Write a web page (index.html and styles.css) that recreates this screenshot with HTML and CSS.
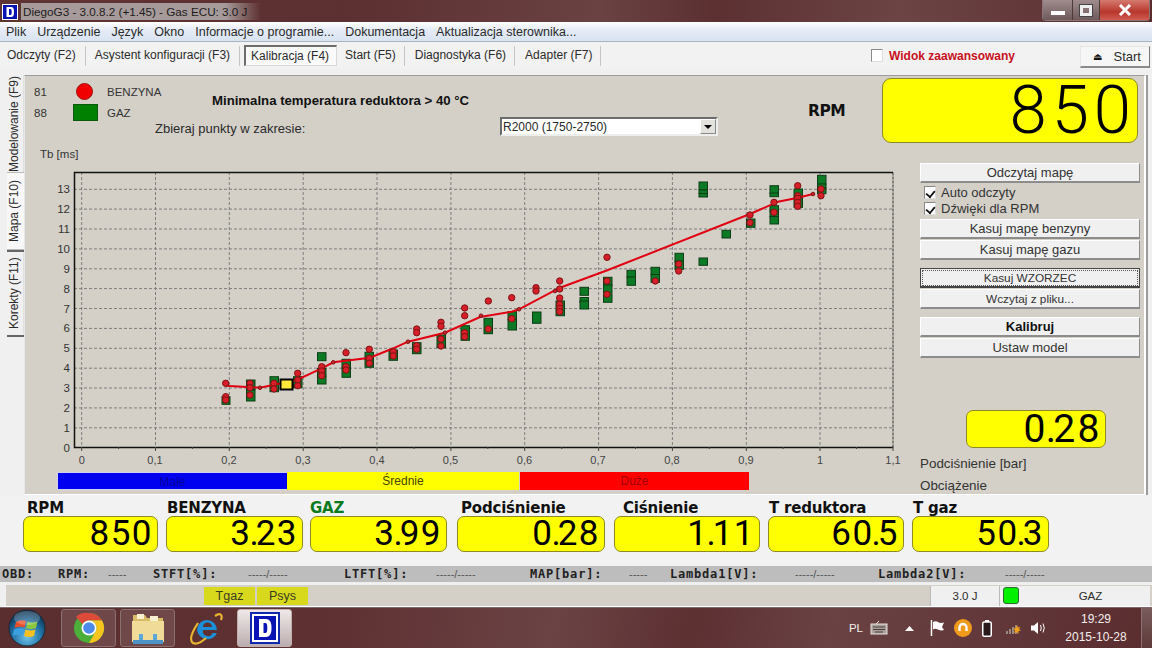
FILE: index.html
```html
<!DOCTYPE html>
<html lang="pl">
<head>
<meta charset="utf-8">
<title>DiegoG3</title>
<link rel="stylesheet" href="styles.css">
</head>
<body>
<div class="app">
  <header class="titlebar">
    <svg class="app-ico" viewBox="0 0 16 16"><rect width="16" height="16" fill="#fff"/><rect x="1" y="1" width="14" height="14" fill="#0a14b4"/><path d="M4.5 3h4.5c2.300 0 3 1.600 3 5s-.7 5-3 5H4.500z" fill="#fff"/><path d="M7 5h1.500c.9 0 1.200 1 1.200 3s-.3 3-1.200 3H7z" fill="#0a14b4"/></svg>
    <span class="title-text">DiegoG3 - 3.0.8.2 (+1.45) - Gas ECU: 3.0 J</span>
    <div class="winbtns">
      <span class="wb wb-min"><i></i></span>
      <span class="wb wb-max"><i></i></span>
      <span class="wb wb-close">
        <svg viewBox="0 0 14 12" width="14" height="12"><path d="M2 1l10 10M12 1L2 11" stroke="#fff" stroke-width="3"/></svg>
      </span>
    </div>
  </header>

  <nav class="menubar">
    <span>Plik</span><span>Urządzenie</span><span>Język</span><span>Okno</span><span>Informacje o programie...</span><span>Dokumentacja</span><span>Aktualizacja sterownika...</span>
  </nav>

  <div class="tabbar">
    <span class="tab">Odczyty (F2)</span>
    <span class="tab">Asystent konfiguracji (F3)</span>
    <span class="tab tab-active">Kalibracja (F4)</span>
    <span class="tab">Start (F5)</span>
    <span class="tab">Diagnostyka (F6)</span>
    <span class="tab">Adapter (F7)</span>
    <label class="adv"><i class="cb"></i>Widok zaawansowany</label>
    <button class="start-btn"><span class="eject">⏏</span>Start</button>
  </div>

  <main class="workspace">
    <div class="vtabs">
      <span class="vtab">Modelowanie (F9)</span>
      <span class="vtab">Mapa (F10)</span>
      <span class="vtab">Korekty (F11)</span>
    </div>
    <section class="panel">
      <div class="head">
        <div class="legend">
          <div class="leg-row"><span class="leg-num">81</span><span class="leg-ico"><i class="leg-dot"></i></span><span>BENZYNA</span></div>
          <div class="leg-row"><span class="leg-num">88</span><span class="leg-ico"><i class="leg-sq"></i></span><span>GAZ</span></div>
          <div class="axis-name">Tb [ms]</div>
        </div>
        <div class="center">
          <div class="cond">Minimalna temperatura reduktora &gt; 40 °C</div>
          <div class="range">
            <span class="range-label">Zbieraj punkty w zakresie:</span>
            <div class="select"><span>R2000 (1750-2750)</span><i class="sel-btn"></i></div>
          </div>
        </div>
        <div class="rpm-label">RPM</div>
        <div class="lcd lcd-big">850</div>
      </div>
      <div class="body">
        <div class="chart-col">
          <svg class="chart" viewBox="24 163 881 307" width="881" height="307">
            <g class="grid">
              <path d="M81.700 172V447M155.500 172V447M229.300 172V447M303.200 172V447M377 172V447M450.900 172V447M524.700 172V447M598.600 172V447M672.400 172V447M746.300 172V447M820 172V447"/>
              <path d="M74 427.800H893M74 407.900H893M74 388H893M74 368.200H893M74 348.300H893M74 328.400H893M74 308.500H893M74 288.600H893M74 268.800H893M74 248.900H893M74 229H893M74 209.100H893M74 189.300H893"/>
            </g>
            <path class="frame" d="M893 172.500V447.500"/>
            <path class="axes" d="M893 172.500H74.500V447.500H893"/>
            <path class="ticks" d="M81.700 447v4M118.600 447v2M155.500 447v4M192.400 447v2M229.300 447v4M266.200 447v2M303.200 447v4M340.100 447v2M377 447v4M414 447v2M450.900 447v4M487.800 447v2M524.700 447v4M561.700 447v2M598.600 447v4M635.500 447v2M672.400 447v4M709.300 447v2M746.300 447v4M783.200 447v2M820 447v4M856.500 447v2M893 447v4"/>
            <g class="ylab">
              <text x="70" y="452">0</text><text x="70" y="432">1</text><text x="70" y="412">2</text><text x="70" y="392">3</text><text x="70" y="372">4</text><text x="70" y="352">5</text><text x="70" y="332">6</text><text x="70" y="313">7</text><text x="70" y="293">8</text><text x="70" y="273">9</text><text x="70" y="253">10</text><text x="70" y="233">11</text><text x="70" y="213">12</text><text x="70" y="193">13</text>
            </g>
            <g class="xlab">
              <text x="81.700" y="464">0</text><text x="155" y="464">0,1</text><text x="229" y="464">0,2</text><text x="303" y="464">0,3</text><text x="377" y="464">0,4</text><text x="450.500" y="464">0,5</text><text x="524.500" y="464">0,6</text><text x="598" y="464">0,7</text><text x="672" y="464">0,8</text><text x="746" y="464">0,9</text><text x="820" y="464">1</text><text x="893" y="464">1,1</text>
            </g>
            <g class="gas">
              <rect x="222" y="396.700" width="8" height="7.600"/>
              <rect x="246.500" y="380" width="8.500" height="10"/><rect x="246.500" y="390" width="8.500" height="11"/>
              <rect x="270" y="376.700" width="8.500" height="15"/>
              <rect x="293.500" y="376.700" width="8.500" height="11"/>
              <rect x="317.500" y="352.700" width="8.500" height="8"/>
              <rect x="317.500" y="368.300" width="8.500" height="8"/><rect x="317.500" y="376" width="8.500" height="8"/>
              <rect x="342" y="359.300" width="8.500" height="9"/><rect x="342" y="368" width="8.500" height="9.300"/>
              <rect x="365" y="352.300" width="8.500" height="7"/><rect x="365" y="359" width="8.500" height="8.300"/>
              <rect x="389" y="350" width="8.500" height="10.300"/>
              <rect x="412.500" y="342.700" width="8.500" height="11"/>
              <rect x="437" y="335" width="8.500" height="12.700"/>
              <rect x="461" y="325.700" width="8.500" height="14.600"/>
              <rect x="484" y="318.300" width="8.500" height="15.400"/>
              <rect x="508" y="311.700" width="8.500" height="8"/><rect x="508" y="319.500" width="8.500" height="10.500"/>
              <rect x="532.500" y="312" width="8.500" height="11.300"/>
              <rect x="556" y="301" width="8.500" height="14.700"/>
              <rect x="580" y="287.300" width="8.500" height="8"/><rect x="580" y="297.500" width="8.500" height="5"/><rect x="580" y="301" width="8.500" height="8"/>
              <rect x="603.500" y="277.300" width="8.500" height="8"/><rect x="603.500" y="285" width="8.500" height="8"/><rect x="603.500" y="294" width="8.500" height="8.300"/>
              <rect x="627" y="270.300" width="8.500" height="7"/><rect x="627" y="277" width="8.500" height="8.300"/>
              <rect x="651" y="267.300" width="8.500" height="7.500"/><rect x="651" y="274.500" width="8.500" height="7.800"/>
              <rect x="675" y="253.300" width="8.500" height="8"/><rect x="675" y="261" width="8.500" height="8.300"/>
              <rect x="699" y="258" width="8.500" height="7.300"/>
              <rect x="722" y="230.300" width="8.500" height="7.700"/>
              <rect x="746.500" y="219" width="8.500" height="8.300"/>
              <rect x="770" y="205.700" width="8.500" height="6"/><rect x="770" y="211" width="8.500" height="6"/><rect x="770" y="216.500" width="8.500" height="7.500"/>
              <rect x="770" y="185.700" width="8.500" height="8"/><rect x="770" y="193" width="8.500" height="3.700"/>
              <rect x="794" y="189" width="8.500" height="9"/><rect x="794" y="198" width="8.500" height="9.300"/>
              <rect x="817.500" y="175.300" width="8.500" height="9"/><rect x="817.500" y="184" width="8.500" height="4"/><rect x="817.500" y="188" width="8.500" height="5.700"/>
              <rect x="699" y="182" width="8.500" height="8"/><rect x="699" y="190" width="8.500" height="3.500"/><rect x="699" y="193.500" width="8.500" height="3.500"/>
            </g>
            <polyline class="curve" points="225,385.700 260,387.700 296.700,380 321.700,368.300 333.300,362.300 370,357.700 393.300,348.300 408,341.700 445,332.700 480,317 511.700,311.700 519,309.300 560,287.700 608,270 750,214 778,201.700 798,197.700 813,194"/>
            <g class="dots">
              <circle cx="225.700" cy="383.300" r="3.200"/><circle cx="225.700" cy="396.700" r="3.200"/><circle cx="225.700" cy="400" r="3.200"/><circle cx="250" cy="383.300" r="3.200"/><circle cx="250" cy="387.700" r="3.200"/><circle cx="250" cy="395" r="3.200"/><circle cx="274" cy="383.300" r="3.200"/><circle cx="274" cy="389" r="3.200"/><circle cx="297.700" cy="373.300" r="3.200"/><circle cx="297.700" cy="380" r="3.200"/><circle cx="297.700" cy="385.700" r="3.200"/><circle cx="321.700" cy="366.700" r="3.200"/><circle cx="321.700" cy="371" r="3.200"/><circle cx="321.700" cy="375.700" r="3.200"/><circle cx="346" cy="352.700" r="3.200"/><circle cx="346" cy="366.700" r="3.200"/><circle cx="346" cy="370" r="3.200"/><circle cx="369.300" cy="349.300" r="3.200"/><circle cx="369.300" cy="358.300" r="3.200"/><circle cx="369.300" cy="363.300" r="3.200"/><circle cx="393.300" cy="351.700" r="3.200"/><circle cx="393.300" cy="356" r="3.200"/><circle cx="416.700" cy="329" r="3.200"/><circle cx="416.700" cy="332.700" r="3.200"/><circle cx="416.700" cy="345.700" r="3.200"/><circle cx="416.700" cy="349.300" r="3.200"/><circle cx="441" cy="322.300" r="3.200"/><circle cx="441" cy="326.300" r="3.200"/><circle cx="441" cy="339" r="3.200"/><circle cx="441" cy="346" r="3.200"/><circle cx="464.700" cy="308" r="3.200"/><circle cx="464.700" cy="315.700" r="3.200"/><circle cx="464.700" cy="332.700" r="3.200"/><circle cx="464.700" cy="336.700" r="3.200"/><circle cx="488.300" cy="301" r="3.200"/><circle cx="488.300" cy="329" r="3.200"/><circle cx="511.700" cy="297.700" r="3.200"/><circle cx="511.700" cy="318.700" r="3.200"/><circle cx="536" cy="287.700" r="3.200"/><circle cx="536" cy="291" r="3.200"/><circle cx="559.700" cy="281" r="3.200"/><circle cx="559.700" cy="289" r="3.200"/><circle cx="559.700" cy="298" r="3.200"/><circle cx="559.700" cy="304.300" r="3.200"/><circle cx="559.700" cy="308.300" r="3.200"/><circle cx="559.700" cy="311.700" r="3.200"/><circle cx="607" cy="257.300" r="3.200"/><circle cx="607" cy="281" r="3.200"/><circle cx="607" cy="294.300" r="3.200"/><circle cx="655.300" cy="281" r="3.200"/><circle cx="678.700" cy="264" r="3.200"/><circle cx="678.700" cy="271" r="3.200"/><circle cx="750" cy="215" r="3.200"/><circle cx="750" cy="222.700" r="3.200"/><circle cx="774" cy="202.300" r="3.200"/><circle cx="774" cy="212.300" r="3.200"/><circle cx="797.700" cy="185.700" r="3.200"/><circle cx="797.700" cy="195.700" r="3.200"/><circle cx="797.700" cy="198.300" r="3.200"/><circle cx="797.700" cy="202.300" r="3.200"/><circle cx="797.700" cy="206.300" r="3.200"/><circle cx="821" cy="189" r="3.200"/><circle cx="821" cy="195.700" r="3.200"/>
              <circle cx="260" cy="387.700" r="1.800"/><circle cx="333.300" cy="362.300" r="1.800"/><circle cx="408" cy="341.700" r="1.800"/><circle cx="445" cy="332.700" r="1.800"/><circle cx="481" cy="315.700" r="1.800"/><circle cx="519" cy="309.300" r="1.800"/><circle cx="555" cy="291" r="1.800"/><circle cx="813" cy="194" r="1.800"/>
            </g>
            <rect class="marker" x="280.500" y="379.500" width="12" height="10"/>
          </svg>
          <div class="bands">
            <span class="band band-low">Małe</span>
            <span class="band band-mid">Średnie</span>
            <span class="band band-high">Duże</span>
          </div>
        </div>
        <aside class="side">
          <button class="btn">Odczytaj mapę</button>
          <label class="check"><i class="cb cb-on"></i>Auto odczyty</label>
          <label class="check check-last"><i class="cb cb-on"></i>Dźwięki dla RPM</label>
          <button class="btn">Kasuj mapę benzyny</button>
          <button class="btn">Kasuj mapę gazu</button>
          <button class="btn btn-focus btn-small btn-gap">Kasuj WZORZEC</button>
          <button class="btn btn-small">Wczytaj z pliku...</button>
          <button class="btn btn-bold btn-gap">Kalibruj</button>
          <button class="btn">Ustaw model</button>
          <div class="lcd lcd-mid">0<span class="pt">.</span>28</div>
          <div class="side-label">Podciśnienie [bar]</div>
          <div class="side-label side-label-2">Obciążenie</div>
        </aside>
      </div>
    </section>
  </main>

  <section class="readouts">
    <div class="ro ro-1"><div class="ro-name">RPM</div><div class="lcd lcd-sm">850</div></div>
    <div class="ro ro-2"><div class="ro-name">BENZYNA</div><div class="lcd lcd-sm">3<span class="pt">.</span>23</div></div>
    <div class="ro ro-3"><div class="ro-name ro-green">GAZ</div><div class="lcd lcd-sm">3<span class="pt">.</span>99</div></div>
    <div class="ro ro-4"><div class="ro-name">Podciśnienie</div><div class="lcd lcd-sm">0<span class="pt">.</span>28</div></div>
    <div class="ro ro-5"><div class="ro-name">Ciśnienie</div><div class="lcd lcd-sm">1<span class="pt">.</span>11</div></div>
    <div class="ro ro-6"><div class="ro-name">T reduktora</div><div class="lcd lcd-sm">60<span class="pt">.</span>5</div></div>
    <div class="ro ro-7"><div class="ro-name">T gaz</div><div class="lcd lcd-sm">50<span class="pt">.</span>3</div></div>
  </section>

  <div class="obd">
    <b class="o1">OBD:</b><b class="o2">RPM:</b><span class="o3">-----</span><b class="o4">STFT[%]:</b><span class="o5">-----/-----</span><b class="o6">LTFT[%]:</b><span class="o7">-----/-----</span><b class="o8">MAP[bar]:</b><span class="o9">-----</span><b class="o10">Lambda1[V]:</b><span class="o11">-----/-----</span><b class="o12">Lambda2[V]:</b><span class="o13">-----/-----</span>
  </div>

  <footer class="status">
    <span class="tile tile-1">Tgaz</span><span class="tile">Psys</span>
    <span class="st-ver">3.0 J</span>
    <span class="st-fuel"><i class="led"></i><span class="st-fuel-text">GAZ</span></span>
  </footer>

  <div class="taskbar">
    <span class="orb">
      <svg viewBox="0 0 38 38" width="38" height="38">
        <defs><radialGradient id="orbg" cx="50%" cy="75%" r="70%"><stop offset="0" stop-color="#6fc3ea"/><stop offset=".6" stop-color="#1f6ea3"/><stop offset="1" stop-color="#0d3250"/></radialGradient></defs>
        <circle cx="19" cy="19" r="18" fill="url(#orbg)" stroke="#1a2a35"/>
        <path d="M8 13q5-3 10-1l-1.500 6.500q-5-1.500-10 .5z" fill="#e8502a"/>
        <path d="M19.500 12.500q5 2 10 0l-1.500 6.500q-5 2-10 0z" fill="#8cc63f"/>
        <path d="M6 20.500q5-2 10-.5l-1.500 6.500q-5-1.500-10 .5z" fill="#3aa0e0"/>
        <path d="M17.500 20.500q5 2 10 0L26 27q-5 2-10 0z" fill="#f5c020"/>
        <ellipse cx="19" cy="9" rx="13" ry="7" fill="#fff" opacity=".22"/>
      </svg>
    </span>
    <span class="task task-on">
      <svg viewBox="0 0 32 32" width="32" height="32">
        <circle cx="16" cy="16" r="15" fill="#4caf3a"/>
        <path d="M16 1a15 15 0 0 1 13 7.500H16a7.500 7.500 0 0 0-6.500 3.750L3 4.800A15 15 0 0 1 16 1z" fill="#dd4a3a"/>
        <path d="M29 8.500A15 15 0 0 1 16 31l6.500-11.250A7.500 7.500 0 0 0 16 8.500z" fill="#f7c61e"/>
        <circle cx="16" cy="16" r="7.500" fill="#fff"/><circle cx="16" cy="16" r="5.800" fill="#4c8be8"/>
      </svg>
    </span>
    <span class="task task-on">
      <svg viewBox="0 0 36 34" width="36" height="34">
        <path d="M3 4h12l2 3h16v24H3z" fill="#d8bc68"/><rect x="7" y="3" width="7" height="5" fill="#f8f0d0"/><rect x="20" y="5" width="8" height="5" fill="#f8f0d0"/>
        <rect x="2" y="10" width="32" height="21" fill="#f0dc98"/>
        <path d="M9 23h18v10H9z" fill="#5aa8d8"/><path d="M3 29h30v4H3z" fill="#4c94c8"/><rect x="13" y="22" width="10" height="7" fill="#f0dc98"/>
      </svg>
    </span>
    <span class="task">
      <svg viewBox="0 0 34 34" width="34" height="34">
        <path d="M7 19a10 10 0 1 1 20 0H13a5 5 0 0 0 9.500 3H27A10.500 10.500 0 0 1 7 19zm6-3h9a4.500 4.500 0 0 0-9 0z" fill="#1c8fd8"/>
        <path d="M25 5c5-3.500 8-1.500 6 4M8 12C2 21-1 29 3 32c3 1.500 8-.5 13-5" fill="none" stroke="#e8b530" stroke-width="2.200"/>
      </svg>
    </span>
    <span class="task task-light">
      <svg viewBox="0 0 30 32" width="30" height="32"><rect width="30" height="32" fill="#1028b0"/><rect x="2" y="2" width="26" height="28" fill="#fff"/><rect x="4" y="4" width="22" height="24" fill="#0a14b4"/><path d="M9 7h7c4 0 5.500 3.500 5.500 9s-1.500 9-5.500 9H9z" fill="#fff"/><path d="M13.500 11h2c1.300 0 1.800 1.500 1.800 5s-.5 5-1.800 5h-2z" fill="#0a14b4"/></svg>
    </span>
    <div class="tray">
      <span class="lang">PL</span>
      <svg class="ti-kb" viewBox="0 0 18 14" width="18" height="14"><rect x="1" y="3" width="16" height="10" fill="#a9a29c" stroke="#e6e0da"/><path d="M3 6h12M3 8.500h12M5 11h8" stroke="#4a3a3a"/><path d="M6 3l3-3" stroke="#e6e0da"/></svg>
      <svg class="ti-up" viewBox="0 0 9 5" width="9" height="5"><path d="M0 5l4.500-5L9 5z" fill="#fff"/></svg>
      <svg class="ti-flag" viewBox="0 0 15 16" width="15" height="16"><path d="M1.500 0v16" stroke="#fff" stroke-width="1.500"/><path d="M3 2q3-1.500 5 0t6 .5L12 7l2 3q-3 1-6-.5T3 9.500z" fill="#fff"/></svg>
      <svg class="ti-org" viewBox="0 0 18 18" width="18" height="18"><circle cx="9" cy="9" r="9" fill="#f09a1c"/><path d="M5.500 12V8.500a3.500 3.500 0 0 1 7 0V12" fill="none" stroke="#fff" stroke-width="2.400"/></svg>
      <svg class="ti-bat" viewBox="0 0 10 17" width="10" height="17"><rect x=".75" y="2" width="8.500" height="14.250" rx="1.500" fill="#2a1a1a" stroke="#fff" stroke-width="1.500"/><rect x="3" y="0" width="4" height="2" fill="#fff"/></svg>
      <svg class="ti-net" viewBox="0 0 16 14" width="16" height="14"><path d="M1 13v-3M4 13V8M7 13V6M10 13V4" stroke="#9a8a80" stroke-width="2"/><path d="M11 4l1 2.500 2.500-.5L13 8l2 1.500-2.500.5V13l-2-2-2.500 1 1-2.500-1.500-2 2.500-.5z" fill="#f0a01c"/></svg>
      <svg class="ti-vol" viewBox="0 0 16 16" width="16" height="16"><path d="M1 5.500h3L8 2v12L4 10.500H1z" fill="#fff"/><path d="M10.500 5q1.500 3 0 6M13 3.500q2.500 4.500 0 9" fill="none" stroke="#fff"/></svg>
      <div class="clock"><span>19:29</span><span>2015-10-28</span></div>
      <span class="desk"></span>
    </div>
  </div>
</div>
</body>
</html>
```
FILE: styles.css
```css
* { box-sizing: border-box; }
html, body { margin: 0; padding: 0; }
body { width: 1152px; height: 648px; overflow: hidden; background: #f0f0f0; font-family: "Liberation Sans", Arial, sans-serif; font-size: 12px; color: #2b2b2b; }
.app { width: 1152px; height: 648px; display: flex; flex-direction: column; }

/* title bar */
.titlebar { height: 22px; flex: none; display: flex; align-items: center; padding-left: 2px; background: linear-gradient(90deg, #5f3434 0, #5c2f30 30%, #6a4242 52%, #5c3030 62%, #6c4444 78%, #5a2d2d 100%); }
.app-ico { width: 16px; height: 16px; margin-top: 1px; }
.title-text { margin-left: 3px; padding: 2px 14px 2px 2px; color: #1c1c1c; font-size: 11.700px; background: linear-gradient(90deg, #a79a9a 85%, rgba(167,154,154,0)); }
.winbtns { margin-left: auto; margin-right: 2px; height: 21px; width: 108px; display: flex; align-self: flex-start; border: 1px solid #8a7676; border-top: 0; border-radius: 0 0 4px 4px; }
.wb { display: flex; align-items: center; justify-content: center; }
.wb-min { width: 30px; background: linear-gradient(#a08c8c, #6e5a5a); border-right: 1px solid #4c3a3a; }
.wb-min i { width: 14px; height: 4px; margin-top: 6px; background: #fff; }
.wb-max { width: 27px; background: linear-gradient(#a08c8c, #6e5a5a); border-right: 1px solid #4c3a3a; }
.wb-max i { width: 12px; height: 11px; border: 3px solid #eee; outline: 1px solid #444; }
.wb-close { flex: 1; background: linear-gradient(#d57a6e, #b8362c 60%, #cf5c50); }

/* menu */
.menubar { height: 20px; flex: none; display: flex; align-items: center; gap: 11px; padding-left: 6px; background: linear-gradient(#fff, #e6ecf6 40%, #d8e3f2); border-bottom: 1px solid #a9b4c0; font-size: 12.500px; color: #2a2a2a; }

/* tabs */
.tabbar { height: 27px; flex: none; display: flex; align-items: center; background: #f2f2f2; font-size: 12px; position: relative; }
.tab { height: 20px; line-height: 18px; padding: 0 9px 0 7px; border-right: 1px solid #c4c4c4; white-space: nowrap; }
.tab:nth-child(2) { padding: 0 9px 0 9px; }
.tab-active { margin-left: 4px; padding: 0 6px 0 4px; height: 21px; border: 1px solid #d8d8d8; border-left: 2px solid #6c6c6c; border-top: 2px solid #6c6c6c; background: #fafafa; line-height: 18px; width: 93px; text-align: center; }
.tab-active + .tab { padding-left: 8px; }
.tab:nth-child(4) { padding-right: 8px; }
.tab:nth-child(5), .tab:nth-child(6) { padding-left: 10px; padding-right: 8px; }
.adv { margin-left: auto; display: flex; align-items: center; gap: 6px; color: #c8101c; font-weight: bold; font-size: 12px; }
.cb { display: block; width: 12px; height: 13px; background: #fff; border: 1px solid #8a8a8a; border-right-color: #ddd; border-bottom-color: #ddd; position: relative; flex: none; }
.start-btn { margin: 3px 2px 0 65px; width: 70px; height: 22px; border: 1px solid #e6e6e6; border-right: 1px solid #777; border-bottom: 2px solid #8a8a8a; background: #f6f6f6; font: 13px "Liberation Sans", Arial, sans-serif; color: #2b2b2b; display: flex; align-items: center; justify-content: flex-end; padding: 0 8px 0 0; }
.eject { font-family: "DejaVu Sans", sans-serif; font-size: 10px; margin-right: 11px; color: #111; }

/* workspace */
.workspace { height: 426px; flex: none; display: flex; padding-top: 6px; }
.vtabs { width: 24px; height: 262px; flex: none; display: flex; flex-direction: column; padding-left: 7px; border-right: 1px solid #e0e0e0; }
.vtab { writing-mode: vertical-rl; transform: rotate(180deg); font-size: 12px; white-space: nowrap; width: 17px; text-align: center; line-height: 15px; }
.vtab:nth-child(1) { height: 97px; }
.vtab:nth-child(2) { height: 78px; border-top: 1px solid #bbb; border-bottom: 1px solid #bbb; background: #f8f8f8; }
.vtab:nth-child(3) { height: 87px; border-top: 2px solid #666; border-bottom: 2px solid #666; }
.panel { width: 1122px; height: 420px; background: #d4d0c8; border-top: 1px solid #9c9c9c; border-left: 1px solid #e8e8e8; border-right: 2px solid #fff; border-bottom: 1px solid #fff; box-shadow: 2px 0 0 #9c9c9c; display: flex; flex-direction: column; }

.head { height: 87px; flex: none; display: flex; align-items: flex-start; font-size: 11.500px; }
.legend { width: 130px; flex: none; padding: 5px 0 0 9px; color: #333; white-space: nowrap; }
.leg-row { display: flex; align-items: center; height: 21px; }
.leg-num { width: 39px; flex: none; }
.leg-ico { width: 34px; flex: none; display: flex; justify-content: flex-start; }
.leg-dot { display: block; width: 17px; height: 17px; margin-left: 3px; border-radius: 50%; background: #f00000; border: 1px solid #a01010; }
.leg-sq { display: block; width: 25px; height: 17px; background: #008000; border: 1px solid #0a5a0a; }
.axis-name { margin: 24px 0 0 6px; line-height: 14px; }
.center { width: 563px; flex: none; padding-top: 18px; }
.cond { margin-left: 57px; font-weight: bold; font-size: 13.200px; line-height: 14px; color: #111; white-space: nowrap; }
.range { display: flex; align-items: flex-start; margin-top: 9px; }
.range-label { width: 345px; flex: none; margin-top: 5px; line-height: 14px; font-size: 13px; }
.select { width: 218px; height: 19px; display: flex; align-items: center; justify-content: space-between; background: #fff; border: 2px solid #6c6c6c; border-right-color: #eee; border-bottom-color: #eee; padding-left: 1px; font-size: 12px; }
.sel-btn { width: 16px; height: 15px; background: #e4e2dc; border: 1px solid #888; border-top-color: #fff; border-left-color: #fff; position: relative; }
.sel-btn::after { content: ""; position: absolute; left: 3px; top: 5px; border: 4px solid transparent; border-top: 4px solid #000; border-bottom: 0; }
.rpm-label { margin: 26px 0 0 90px; width: 38px; flex: none; font: bold 15.500px/18px "DejaVu Sans", sans-serif; color: #111; letter-spacing: -.5px; }
.lcd { background: #ffff00; border: 1px solid #8c8a20; font-family: Roboto, "Liberation Sans", sans-serif; font-weight: 400; color: #000; text-align: right; white-space: nowrap; }
.lcd-big { margin: 2px 0 0 36px; width: 256px; height: 65px; flex: none; border-radius: 9px; font-size: 67px; line-height: 63px; letter-spacing: 5px; padding-right: 1px; font-weight: 300; }
.lcd-mid { margin: 51px 0 0 46px; width: 140px; height: 38px; border-radius: 7px; font-size: 39px; line-height: 36px; letter-spacing: 2.500px; padding-right: 3px; }
.lcd-sm { height: 36px; border-radius: 7px; font-size: 35px; line-height: 34px; letter-spacing: 1.500px; padding-right: 4px; }
.pt { letter-spacing: 0; margin-right: -3px; margin-left: -2px; }

.body { flex: 1; display: flex; min-height: 0; }
.chart-col { width: 881px; flex: none; margin-left: -1px; }
.chart { display: block; }
.grid path { fill: none; stroke: #7e7e7e; stroke-width: 1; stroke-dasharray: 3 2; }
.frame { fill: none; stroke: #333; stroke-width: 1; stroke-dasharray: 3 1; }
.axes { fill: none; stroke: #111; stroke-width: 1.500; }
.ticks { fill: none; stroke: #444; stroke-width: 1; }
.ylab text { text-anchor: end; font: 11.500px "Liberation Sans", sans-serif; fill: #333; }
.xlab text { text-anchor: middle; font: 11px "Liberation Sans", sans-serif; fill: #444; }
.gas rect { fill: #0c7a24; stroke: #0d3d16; stroke-width: 1; }
.curve { fill: none; stroke: #e00010; stroke-width: 2; }
.dots circle { fill: #d81e28; stroke: #7c1414; stroke-width: 1; }
.marker { fill: #ffe93a; stroke: #000; stroke-width: 2; }
.bands { display: flex; margin: 2px 0 0 33px; height: 18px; font-size: 12px; text-align: center; line-height: 18px; }
.band { display: block; }
.band-low { width: 230px; background: #0000f0; color: #00009a; border: 1px solid #d0d0f0; border-right: 0; }
.band-mid { width: 232px; background: #ffff00; color: #444400; }
.band-high { width: 229px; margin-left: 1px; background: #ff0000; color: #a00000; }

.side { flex: 1; padding: 0 0 0 15px; display: flex; flex-direction: column; align-items: flex-start; }
.btn { width: 220px; height: 20px; flex: none; margin-bottom: 1px; padding: 0; background: #f0f0f0; border: 0; border-top: 1px solid #fff; border-left: 1px solid #fff; border-right: 1px solid #8c8c8c; border-bottom: 2px solid #8c8c8c; font: 13px/16px "Liberation Sans", Arial, sans-serif; color: #333; }
.btn-gap { margin-top: 7px; }
.btn-small { font-size: 11.800px; }
.btn-bold { font-weight: bold; color: #111; }
.btn-focus { outline: 1px dotted #555; outline-offset: -3px; border-top-color: #444; border-left-color: #444; border-right-color: #444; border-bottom-color: #444; }
.check { display: flex; align-items: center; gap: 5px; height: 16px; margin-left: 4px; font-size: 13px; color: #333; }
.check-last { margin-bottom: 3px; }
.cb-on::after { content: ""; position: absolute; left: 2px; top: 1px; width: 5px; height: 8px; border: solid #111; border-width: 0 2px 2px 0; transform: rotate(40deg) scale(.85); }
.side-label { margin-top: 8px; line-height: 15px; font-size: 13.400px; color: #333; }
.side-label-2 { margin-top: 7px; }

/* readouts */
.readouts { height: 71px; flex: none; padding-top: 5px; display: flex; background: #f2f2f2; }
.ro { flex: none; display: flex; flex-direction: column; margin-left: 8px; }
.ro-name { height: 16px; padding-left: 1px; font: bold 15px/16px "DejaVu Sans", sans-serif; letter-spacing: -.2px; color: #111; white-space: nowrap; }
.ro-green { color: #0a7a1c; padding-left: 0; }
.ro-1 { margin-left: 23px; width: 135px; }
.ro-1 .ro-name, .ro-4 .ro-name { padding-left: 4px; }
.ro-5 .ro-name { padding-left: 9px; }
.ro-2 { width: 137px; }
.ro-3 { margin-left: 7px; width: 137px; }
.ro-4 { margin-left: 10px; width: 148px; }
.ro-5 { margin-left: 9px; width: 146px; }
.ro-6 { width: 136px; }
.ro-7 { width: 137px; }

/* OBD */
.obd { height: 17px; flex: none; background: #bdbdbd; border-bottom: 1px solid #eee; font-size: 11px; line-height: 16px; display: flex; }
.obd b { font: bold 12px/16px "DejaVu Sans Mono", monospace; color: #222; white-space: nowrap; letter-spacing: .8px; }
.obd span { color: #555; white-space: nowrap; }
.o1 { width: 56px; margin-left: 2px; }
.o2 { width: 50px; }
.o3 { width: 45px; }
.o4 { width: 95px; }
.o5 { width: 96px; }
.o6 { width: 92px; }
.o7 { width: 94px; }
.o8 { width: 99px; }
.o9 { width: 41px; }
.o10 { width: 125px; }
.o11 { width: 83px; }
.o12 { width: 127px; }

/* status */
.status { height: 22px; flex: none; margin-top: 2px; display: flex; align-items: center; background: #d4d0c8; border-bottom: 1px solid #fff; border-left: 6px solid #f0f0f0; padding-left: 198px; font-size: 11.500px; }
.tile { width: 51px; height: 18px; line-height: 18px; text-align: center; background: #d8d81c; color: #3c3c20; margin-right: 2px; font-size: 12.500px; }
.st-ver { margin-left: 620px; width: 69px; height: 20px; line-height: 20px; text-align: center; background: #f0f0f0; border-left: 1px solid #bbb; }
.st-fuel { width: 151px; height: 20px; background: #f0f0f0; display: flex; align-items: center; border-left: 1px solid #bbb; padding-left: 3px; }
.led { display: block; width: 16px; height: 17px; background: #00f000; border: 1px solid #2a6a2a; border-radius: 3px; }
.st-fuel-text { flex: 1; text-align: center; padding-left: 12px; }

/* taskbar */
.taskbar { flex: 1; display: flex; align-items: center; background: linear-gradient(100deg, #5a2d2f 0, #5f3133 30%, #6b4344 48%, #5d3032 60%, #6a4244 72%, #5a2d2f 100%); border-top: 1px solid #7e6a6a; position: relative; }
.orb { width: 38px; height: 38px; margin-left: 8px; margin-right: 15px; }
.task { width: 55px; height: 38px; margin-right: 4px; display: flex; align-items: center; justify-content: center; border: 1px solid transparent; }
.task-on { border-color: #8a7272; border-radius: 3px; background: rgba(255,255,255,.12); }
.task-light { margin-left: -1px; border: 1px solid #c0b0b0; border-radius: 3px; background: linear-gradient(#f0e8e8, #bcaeb0); }
.tray { margin-left: auto; display: flex; align-items: center; height: 40px; color: #f4eeee; }
.lang { margin-right: 7px; font-size: 11.500px; }
.ti-kb { margin-right: 17px; }
.ti-up { margin-right: 16px; }
.ti-flag { margin-right: 9px; }
.ti-org { margin-right: 10px; }
.ti-bat { margin-right: 14px; }
.ti-net { margin-right: 8px; }
.ti-vol { margin-right: 18px; }
.clock { width: 64px; display: flex; flex-direction: column; align-items: center; gap: 4px; font-size: 12px; line-height: 14px; }
.desk { width: 11px; height: 40px; margin-left: 13px; border-left: 1px solid #8a7272; background: linear-gradient(#7a5c5c, #5f3a3a); }
```
